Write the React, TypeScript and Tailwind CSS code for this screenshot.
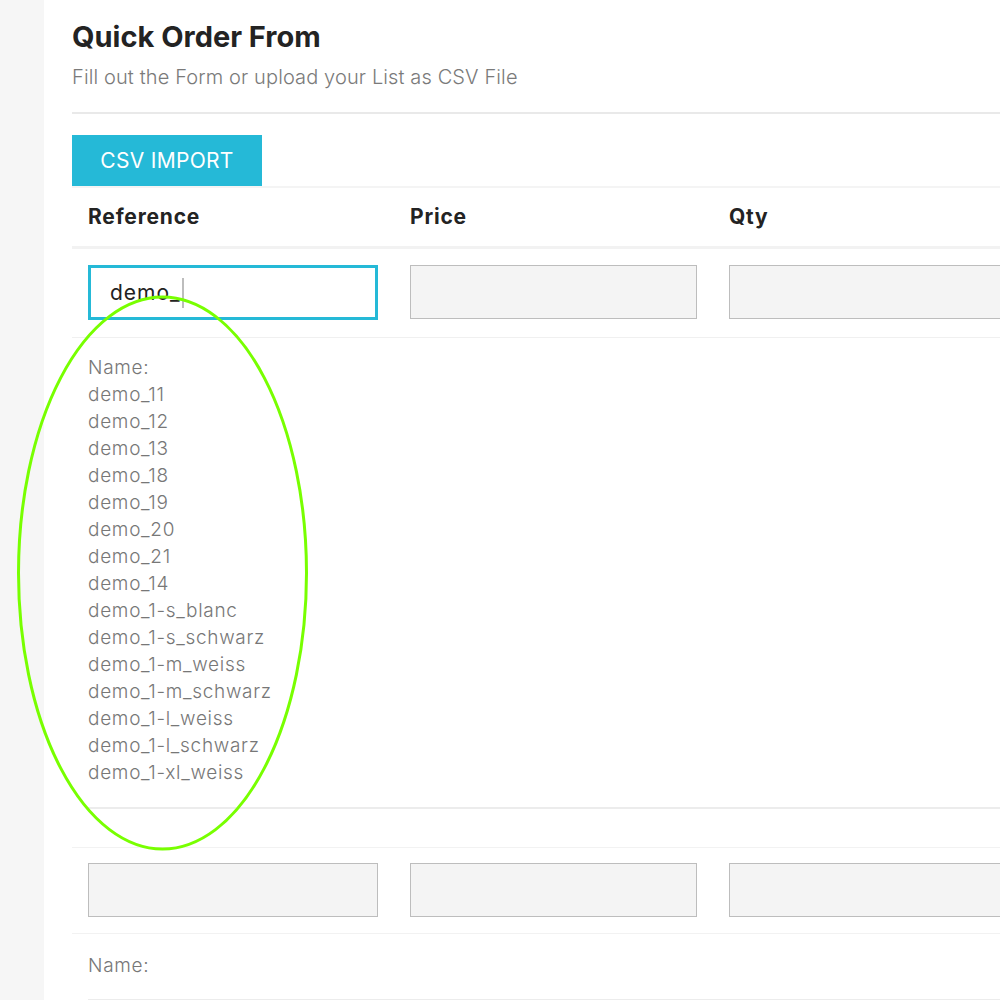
const suggestions = [
  'demo_11',
  'demo_12',
  'demo_13',
  'demo_18',
  'demo_19',
  'demo_20',
  'demo_21',
  'demo_14',
  'demo_1-s_blanc',
  'demo_1-s_schwarz',
  'demo_1-m_weiss',
  'demo_1-m_schwarz',
  'demo_1-l_weiss',
  'demo_1-l_schwarz',
  'demo_1-xl_weiss',
];

const columns = [
  { label: 'Reference', width: 'w-[322px]' },
  { label: 'Price', width: 'w-[319px]' },
  { label: 'Qty', width: 'w-[322px]' },
];

function EmptyInput() {
  return <div className="h-[54px] w-full bg-[#f4f4f4] border border-[#bdbdbd]" />;
}

export default function App() {
  return (
    <div className="relative flex min-h-[1000px] w-[1000px] overflow-hidden bg-white font-['Inter','Liberation_Sans',sans-serif]">
      <aside className="w-[44px] shrink-0 bg-[#f6f6f6]" />

      <main className="flex-1 pl-[28px] pt-5">
        <h1 className="text-[29px] leading-[34px] font-bold text-[#232323]">Quick Order From</h1>
        <p className="mt-[9px] text-[20px] leading-[28px] font-light tracking-[0.12px] text-[#7a7a7a]">
          Fill out the Form or upload your List as CSV File
        </p>

        <div className="mt-[21px] border-t-2 border-[#e9e9e9]" />

        <button className="mt-[21px] flex h-[51px] w-[190px] items-center justify-center bg-[#25b9d7] text-[21px] tracking-[0.3px] text-white">
          CSV IMPORT
        </button>

        <div className="w-[1100px] border-t-2 border-[#f4f4f4]">
          {/* header */}
          <div className="flex h-[61px] items-center border-b-[3px] border-[#f2f2f2]">
            {columns.map((c) => (
              <div key={c.label} className={`${c.width} shrink-0 px-4 text-[21px] font-bold tracking-[0.8px] text-[#232323]`}>
                {c.label}
              </div>
            ))}
          </div>

          {/* first row */}
          <div className="flex border-b border-[#f0f0f0] pt-4 pb-[17px]">
            <div className="w-[322px] shrink-0 px-4">
              <div className="flex h-[55px] w-full items-center border-[3px] border-[#25b9d7] bg-white pl-[19px]">
                <span className="text-[21px] tracking-[1px] text-[#222]">demo_</span>
                <span className="ml-[1px] h-[30px] w-[2px] bg-[#bdbdbd]" />
              </div>
            </div>
            <div className="w-[319px] shrink-0 px-4"><EmptyInput /></div>
            <div className="w-[322px] shrink-0 px-4"><EmptyInput /></div>
          </div>

          <div className="border-b border-[#f2f2f2] px-4 pt-4 pb-[38px]">
            <div className="border-b-2 border-[#ececec] pb-[21px] text-[19px] leading-[27px] font-light tracking-[0.7px] text-[#777]">
              <div>Name:</div>
              {suggestions.map((s) => (
                <div key={s}>{s}</div>
              ))}
            </div>
          </div>

          {/* second row */}
          <div className="flex border-b border-[#f2f2f2] pt-[15px] pb-[16px]">
            <div className="w-[322px] shrink-0 px-4"><EmptyInput /></div>
            <div className="w-[319px] shrink-0 px-4"><EmptyInput /></div>
            <div className="w-[322px] shrink-0 px-4"><EmptyInput /></div>
          </div>

          <div className="px-4 pt-[18px]">
            <div className="border-b-2 border-[#ececec] pb-[20px] text-[19px] leading-[27px] font-light tracking-[0.7px] text-[#777]">Name:</div>
          </div>
        </div>
      </main>

      {/* annotation */}
      <svg className="pointer-events-none absolute left-0 top-0" width="1000" height="1000">
        <ellipse cx="162.5" cy="573" rx="144" ry="276" fill="none" stroke="#78ff00" strokeWidth="3" />
      </svg>
    </div>
  );
}
